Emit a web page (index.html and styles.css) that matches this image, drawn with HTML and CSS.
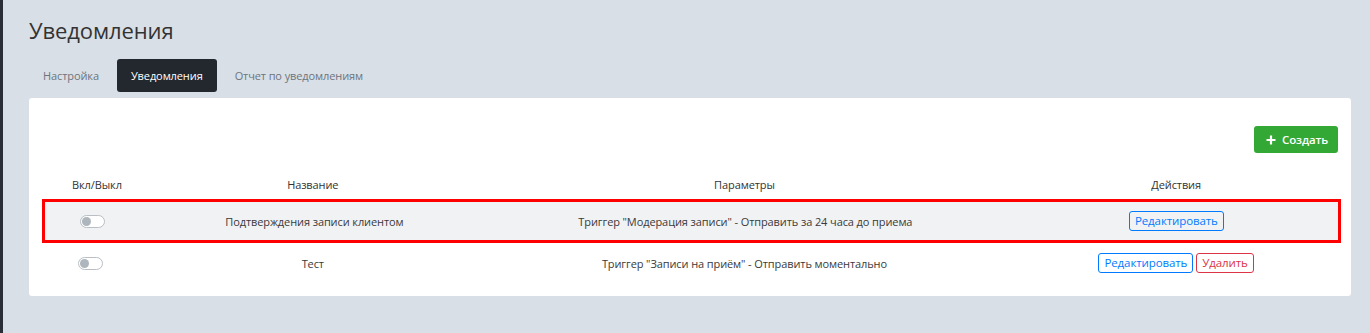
FILE: index.html
```html
<!DOCTYPE html>
<html lang="ru">
<head>
<meta charset="utf-8">
<title>Уведомления</title>
<link rel="stylesheet" href="styles.css">
</head>
<body>
<div class="layout">
  <div class="sidebar"></div>
  <main class="main">
    <h1 class="title">Уведомления</h1>
    <nav class="tabs">
      <a class="tab">Настройка</a>
      <a class="tab active">Уведомления</a>
      <a class="tab">Отчет по уведомлениям</a>
    </nav>
    <section class="card">
      <div class="toolbar">
        <button class="btn-create"><svg class="plus" viewBox="0 0 10 10" width="10" height="10"><path d="M5 0.5v9M0.5 5h9" stroke="#fff" stroke-width="2.2"/></svg>Создать</button>
      </div>
      <div class="grid head">
        <div class="cell">Вкл/Выкл</div>
        <div class="cell">Название</div>
        <div class="cell">Параметры</div>
        <div class="cell">Действия</div>
      </div>
      <div class="grid row highlighted">
        <div class="cell"><span class="switch"><span class="knob"></span></span></div>
        <div class="cell">Подтверждения записи клиентом</div>
        <div class="cell">Триггер "Модерация записи" - Отправить за 24 часа до приема</div>
        <div class="cell actions"><button class="btn-outline blue">Редактировать</button></div>
      </div>
      <div class="grid row">
        <div class="cell"><span class="switch"><span class="knob"></span></span></div>
        <div class="cell">Тест</div>
        <div class="cell">Триггер "Записи на приём" - Отправить моментально</div>
        <div class="cell actions"><button class="btn-outline blue">Редактировать</button><button class="btn-outline red">Удалить</button></div>
      </div>
    </section>
  </main>
</div>
</body>
</html>
```
FILE: styles.css
```css
* { box-sizing: border-box; }
html, body { margin: 0; height: 100%; }
body {
  font-family: "Open Sans", "Liberation Sans", sans-serif;
  background: #d9dfe6;
  color: #3a3a3a;
  font-size: 11px;
  letter-spacing: -0.1px;
}
.layout { display: flex; min-height: 333px; }
.sidebar { width: 3px; background: #2a2f37; flex: none; }
.main { flex: 1; padding: 16px 19px 0 26px; }
.title {
  margin: 0;
  font-size: 22px;
  line-height: 29px;
  font-weight: 400;
  letter-spacing: -0.1px;
  color: #333;
}
.tabs { display: flex; gap: 4px; margin-top: 14px; }
.tab {
  height: 33px;
  display: flex;
  align-items: center;
  padding: 0 14px;
  color: #6c757d;
  border-radius: 3px;
}
.tab.active { background: #23272e; color: #fff; }
.card {
  margin-top: 6px;
  background: #fff;
  border-radius: 3px;
  padding: 28px 13px 13px 14px;
}
.toolbar { display: flex; justify-content: flex-end; height: 26px; margin-bottom: 18px; }
.btn-create {
  display: flex;
  align-items: center;
  gap: 6px;
  height: 27px;
  width: 84px;
  padding: 0 0 0 12px;
  background: #34a835;
  border: 0;
  border-radius: 3px;
  color: #fff;
  font-family: inherit;
  font-size: 11.5px;
  font-weight: 600;
  letter-spacing: -0.1px;
}
.plus { flex: none; }
.grid {
  display: grid;
  grid-template-columns: 1fr 3fr 5fr 3fr;
  align-items: center;
  text-align: center;
}
.head { height: 29px; color: #333; }
.row { height: 40px; }
.row.highlighted {
  height: 38px;
  margin: 3px 0 3px 2px;
  background: #f1f2f4;
  outline: 3px solid #ff0000;
}
.cell { display: flex; justify-content: center; align-items: center; }
.switch {
  width: 25px;
  height: 13px;
  border: 1px solid #b9bfc5;
  border-radius: 7px;
  background: #fff;
  display: flex;
  align-items: center;
  padding-left: 1px;
  margin-right: 13px;
}
.knob { width: 9px; height: 9px; border-radius: 50%; background: #adb5bd; }
.actions { gap: 3px; }
.btn-outline {
  font-family: inherit;
  font-size: 11.5px;
  letter-spacing: -0.1px;
  line-height: 16px;
  padding: 1px 5px;
  height: 20px;
  background: transparent;
  border: 1px solid;
  border-radius: 3px;
}
.btn-outline.blue { color: #007bff; border-color: #007bff; }
.btn-outline.red { color: #dc3545; border-color: #dc3545; }
```
